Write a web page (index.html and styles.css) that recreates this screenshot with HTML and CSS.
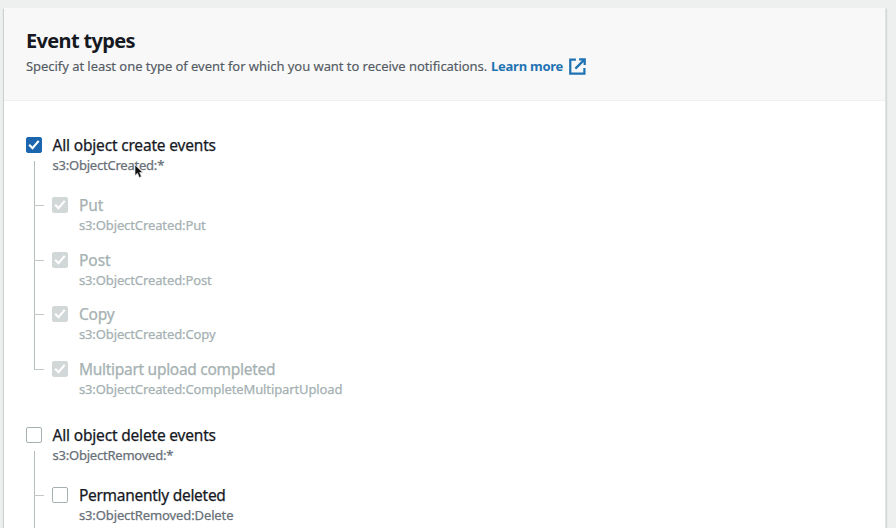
FILE: index.html
```
<!DOCTYPE html>
<html lang="en">
<head>
<meta charset="utf-8">
<title>Event types</title>
<link rel="stylesheet" href="styles.css">
</head>
<body>
<main class="panel">
  <header class="panel-header">
    <h1>Event types</h1>
    <p class="intro"><span class="intro-text">Specify at least one type of event for which you want to receive notifications.</span><a class="learn" href="#">Learn more</a><svg class="external" viewBox="0 0 16 16"><path d="M6.5 1.5H1.2v13.3h13.3V9.5M9.5 1.2h5.3v5.3M14.5 1.5L6 10"/></svg></p>
  </header>
  <section class="events">
    <div class="group">
      <div class="event parent"><span class="box checked"><svg viewBox="0 0 16 16"><path d="M3.2 7.8L6.5 11.2L12.7 3.9"/></svg></span><div><div class="name">All object create events</div><div class="code code-all">s3:ObjectCreated:*</div></div></div>
      <ul class="children">
        <li class="event disabled"><span class="box checked"><svg viewBox="0 0 16 16"><path d="M3.2 7.8L6.5 11.2L12.7 3.9"/></svg></span><div><div class="name name-short">Put</div><div class="code">s3:ObjectCreated:Put</div></div></li>
        <li class="event disabled"><span class="box checked"><svg viewBox="0 0 16 16"><path d="M3.2 7.8L6.5 11.2L12.7 3.9"/></svg></span><div><div class="name name-short">Post</div><div class="code">s3:ObjectCreated:Post</div></div></li>
        <li class="event disabled"><span class="box checked"><svg viewBox="0 0 16 16"><path d="M3.2 7.8L6.5 11.2L12.7 3.9"/></svg></span><div><div class="name">Copy</div><div class="code">s3:ObjectCreated:Copy</div></div></li>
        <li class="event disabled"><span class="box checked"><svg viewBox="0 0 16 16"><path d="M3.2 7.8L6.5 11.2L12.7 3.9"/></svg></span><div><div class="name name-long">Multipart upload completed</div><div class="code">s3:ObjectCreated:CompleteMultipartUpload</div></div></li>
      </ul>
    </div>
    <div class="group">
      <div class="event parent"><span class="box"></span><div><div class="name">All object delete events</div><div class="code code-all">s3:ObjectRemoved:*</div></div></div>
      <ul class="children">
        <li class="event"><span class="box"></span><div><div class="name name-long">Permanently deleted</div><div class="code">s3:ObjectRemoved:Delete</div></div></li>
      </ul>
    </div>
  </section>
</main>
<svg class="cursor" viewBox="0 0 10 15"><path d="M1 1v10.5l2.5-2.3 1.8 4.3 2.1-.9-1.8-4.1h3.2z"/></svg>
</body>
</html>
```
FILE: styles.css
```
* { box-sizing: border-box; }
body {
  margin: 0;
  padding: 8px 0 0 4px;
  height: 528px;
  overflow: hidden;
  background: #eef0f0;
  font-family: "Noto Sans", "Open Sans", sans-serif;
}
.panel {
  width: 882px;
  height: 520px;
  background: #fff;
  border-right: 1px solid #e2e4e4;
  box-shadow: -1px 1px 1px #cdd1d1, 1px 1px 1px #d5d8d8;
}
.panel-header {
  height: 93px;
  padding: 19px 22px 0;
  background: #f8f8f8;
  border-bottom: 1px solid #eeefef;
}
h1 { margin: 0; font-size: 20px; line-height: 27px; font-weight: 700; color: #16191f; letter-spacing: -0.65px; }
.intro {
  display: flex;
  align-items: center;
  margin: 2px 0 0;
  font-size: 13px;
  line-height: 20px;
  color: #545b64;
  white-space: nowrap;
}
.intro-text { width: 465px; letter-spacing: -0.05px; -webkit-text-stroke: 0.15px currentColor; }
.learn { width: 78px; color: #1f73b3; font-weight: 700; text-decoration: none; letter-spacing: -0.25px; }
.external { width: 17px; height: 17px; overflow: visible; fill: none; stroke: #1f73b3; stroke-width: 2.1; }
.events { height: 427px; padding: 33px 22px 0; overflow: hidden; }
.group { height: 290px; }
.group:last-child { overflow: hidden; }
.event { display: flex; white-space: nowrap; }
.box {
  width: 16px;
  height: 16px;
  margin: 3px 10.5px 0 0;
  flex: none;
  border: 1px solid #a5b0b2;
  border-radius: 2px;
  background: #fff;
}
.box svg { display: block; width: 16px; height: 16px; margin: -1px; fill: none; stroke: #fff; stroke-width: 2.2; }
.box.checked { background: #1b66ae; border-color: #1b66ae; }
.name { font-size: 15.5px; line-height: 22px; color: #16191f; letter-spacing: -0.18px; -webkit-text-stroke: 0.25px currentColor; }
.name-short { letter-spacing: 0; }
.name-long { letter-spacing: -0.28px; }
.code { font-size: 13px; line-height: 18px; color: #687078; letter-spacing: -0.11px; -webkit-text-stroke: 0.25px currentColor; }
.code-all { letter-spacing: -0.22px; }
.disabled .box { background: #d2d7d8; border-color: #d2d7d8; }
.disabled .name, .disabled .code { color: #a5b1b2; }
.children {
  position: relative;
  list-style: none;
  margin: 0 0 0 8px;
  padding: 20px 0 0 18.4px;
}
.children::before {
  content: "";
  position: absolute;
  left: 0;
  top: -13px;
  width: 1px;
  height: 209px;
  background: #b5bebf;
}
.children .event { position: relative; height: 54.7px; }
.children .event::before {
  content: "";
  position: absolute;
  left: -18px;
  top: 11px;
  width: 10px;
  height: 1px;
  background: #c0c8c8;
}
.cursor { position: absolute; left: 134px; top: 164px; width: 10px; height: 15px; overflow: visible; fill: #111; stroke: #ddd; stroke-width: .7; }
```
